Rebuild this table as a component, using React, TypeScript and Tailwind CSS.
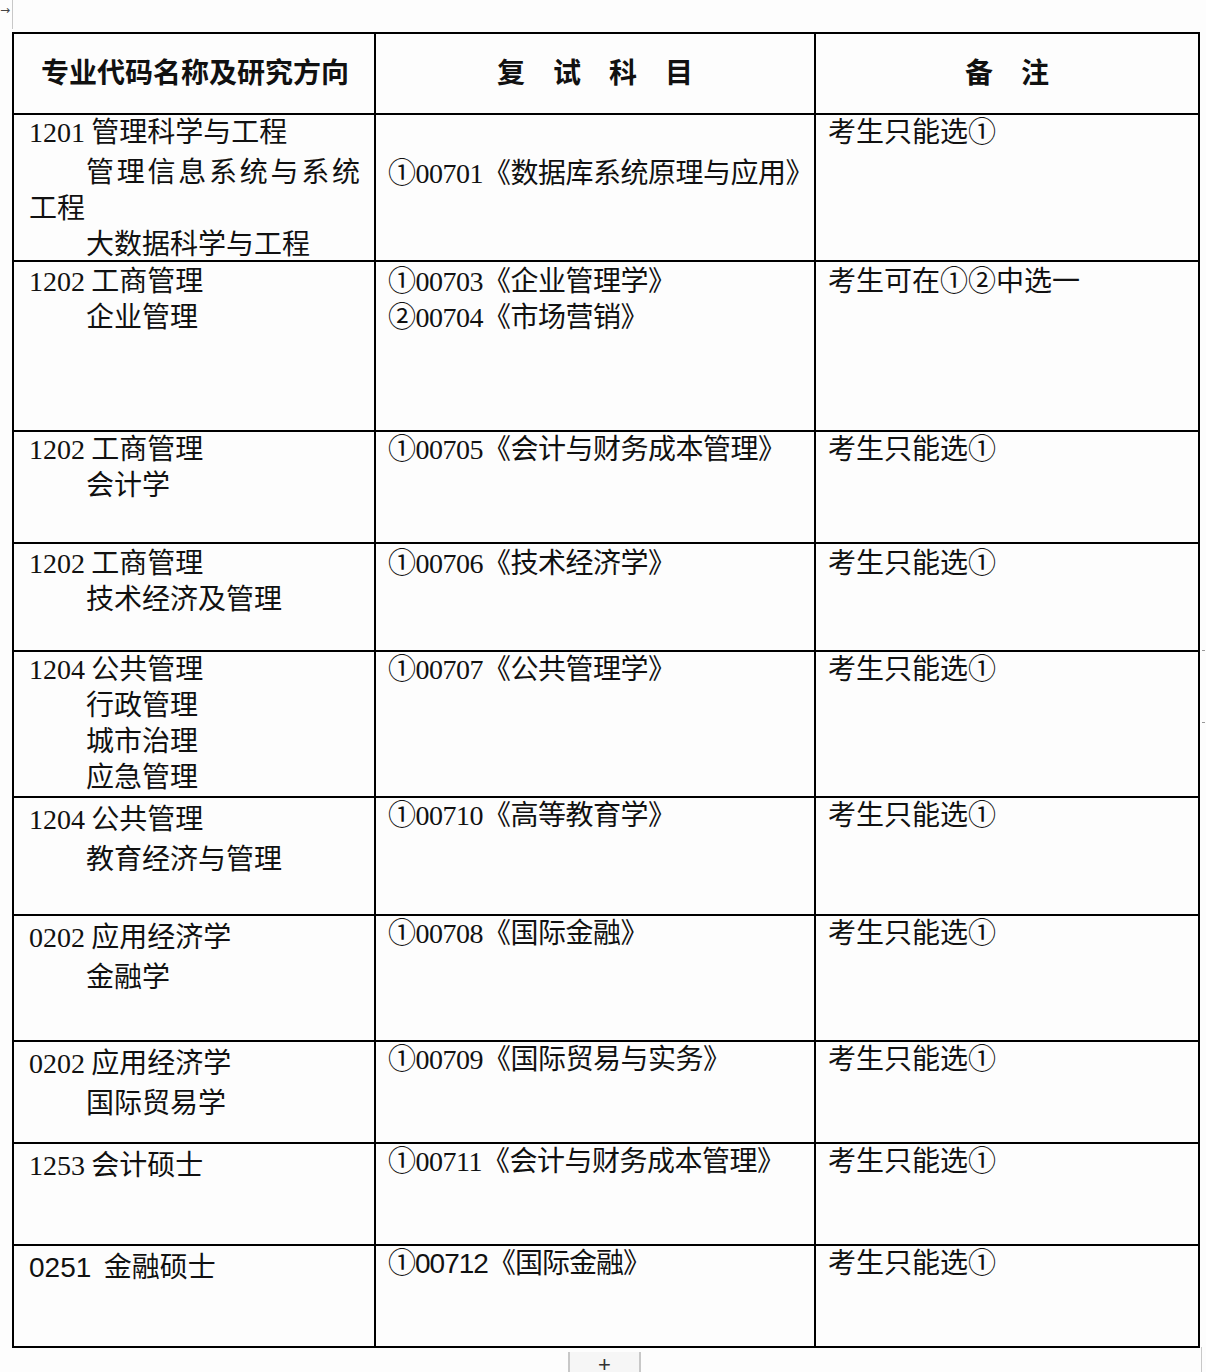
import React from "react";

const CJK = '"Noto Sans CJK SC", sans-serif';
const SERIF_F = '"Liberation Serif", serif';
const SANS_F = '"Liberation Sans", sans-serif';

function mix(text: string, digitFont: string = SERIF_F) {
  const parts = text.split(/(\d+)/);
  return parts.map((p, i) =>
    /^\d+$/.test(p) ? (
      <span key={i} className="leading-[0px]" style={{ fontFamily: digitFont }}>
        {p}
      </span>
    ) : (
      <React.Fragment key={i}>{p}</React.Fragment>
    )
  );
}

type Row = {
  h: string;
  c1: React.ReactNode;
  c2: React.ReactNode;
  c3: React.ReactNode;
};

const remark = "考生只能选①";

function Ind({ children, cls = "" }: { children: React.ReactNode; cls?: string }) {
  return <div className={"pl-[57px] " + cls}>{children}</div>;
}

const rows: Row[] = [
  {
    h: "h-[147px]",
    c1: (
      <div className="leading-[36px] -mt-[3px]">
        <div className="whitespace-nowrap">{mix("1201 管理科学与工程")}</div>
        <p className="mt-[4px] indent-[57px] text-justify whitespace-normal break-all">管理信息系统与系统工程</p>
        <Ind cls="whitespace-nowrap">大数据科学与工程</Ind>
      </div>
    ),
    c2: <div className="pt-[38px] leading-[36px]">{mix("①00701《数据库系统原理与应用》")}</div>,
    c3: <div className="leading-[36px] -mt-[3px]">{remark}</div>,
  },
  {
    h: "h-[170px]",
    c1: (
      <div className="leading-[36px] -mt-[1px] whitespace-nowrap">
        <div>{mix("1202 工商管理")}</div>
        <Ind>企业管理</Ind>
      </div>
    ),
    c2: (
      <div className="leading-[36px] -mt-[1px]">
        <div>{mix("①00703《企业管理学》")}</div>
        <div>{mix("②00704《市场营销》")}</div>
      </div>
    ),
    c3: <div className="leading-[36px] -mt-[1px]">考生可在①②中选一</div>,
  },
  {
    h: "h-[112px]",
    c1: (
      <div className="leading-[36px] -mt-[3px] whitespace-nowrap">
        <div>{mix("1202 工商管理")}</div>
        <Ind>会计学</Ind>
      </div>
    ),
    c2: <div className="leading-[36px] -mt-[3px]">{mix("①00705《会计与财务成本管理》")}</div>,
    c3: <div className="leading-[36px] -mt-[3px]">{remark}</div>,
  },
  {
    h: "h-[108px]",
    c1: (
      <div className="leading-[36px] -mt-[1px] whitespace-nowrap">
        <div>{mix("1202 工商管理")}</div>
        <Ind>技术经济及管理</Ind>
      </div>
    ),
    c2: <div className="leading-[36px] -mt-[1px]">{mix("①00706《技术经济学》")}</div>,
    c3: <div className="leading-[36px] -mt-[1px]">{remark}</div>,
  },
  {
    h: "h-[146px]",
    c1: (
      <div className="leading-[36px] -mt-[3px] whitespace-nowrap">
        <div>{mix("1204 公共管理")}</div>
        <Ind>行政管理</Ind>
        <Ind>城市治理</Ind>
        <Ind>应急管理</Ind>
      </div>
    ),
    c2: <div className="leading-[36px] -mt-[3px]">{mix("①00707《公共管理学》")}</div>,
    c3: <div className="leading-[36px] -mt-[3px]">{remark}</div>,
  },
  {
    h: "h-[118px]",
    c1: (
      <div className="leading-[40px] -mt-[1px] whitespace-nowrap">
        <div>{mix("1204 公共管理")}</div>
        <Ind>教育经济与管理</Ind>
      </div>
    ),
    c2: <div className="leading-[32px] -mt-[1px]">{mix("①00710《高等教育学》")}</div>,
    c3: <div className="leading-[32px] -mt-[1px]">{remark}</div>,
  },
  {
    h: "h-[126px]",
    c1: (
      <div className="leading-[40px] -mt-[1px] whitespace-nowrap">
        <div>{mix("0202 应用经济学")}</div>
        <Ind>金融学</Ind>
      </div>
    ),
    c2: <div className="leading-[32px] -mt-[1px]">{mix("①00708《国际金融》")}</div>,
    c3: <div className="leading-[32px] -mt-[1px]">{remark}</div>,
  },
  {
    h: "h-[102px]",
    c1: (
      <div className="leading-[40px] -mt-[1px] whitespace-nowrap">
        <div>{mix("0202 应用经济学")}</div>
        <Ind>国际贸易学</Ind>
      </div>
    ),
    c2: <div className="leading-[32px] -mt-[1px]">{mix("①00709《国际贸易与实务》")}</div>,
    c3: <div className="leading-[32px] -mt-[1px]">{remark}</div>,
  },
  {
    h: "h-[102px]",
    c1: (
      <div className="leading-[40px] -mt-[1px] whitespace-nowrap">
        <div>{mix("1253 会计硕士")}</div>
      </div>
    ),
    c2: <div className="leading-[32px] -mt-[1px]">{mix("①00711《会计与财务成本管理》")}</div>,
    c3: <div className="leading-[32px] -mt-[1px]">{remark}</div>,
  },
  {
    h: "h-[100px]",
    c1: (
      <div className="leading-[40px] -mt-[1px] whitespace-pre">
        <div>{mix("0251  金融硕士", SANS_F)}</div>
      </div>
    ),
    c2: (
      <div className="leading-[32px] -mt-[1px] tracking-[-1px]">{mix("①00712《国际金融》", SANS_F)}</div>
    ),
    c3: <div className="leading-[32px] -mt-[1px]">{remark}</div>,
  },
];

export default function App() {
  return (
    <div
      className="relative w-[1206px] min-h-[1372px] bg-[#fdfdfd] text-[#111] overflow-hidden"
      style={{ fontFamily: CJK }}
    >
      {/* top-left move handle */}
      <div className="h-[32px] flex">
        <div
          className="w-[13px] h-[29px] border-r border-[#c8c8c8] text-[12px] leading-[20px] text-[#444] overflow-hidden"
          style={{ fontFamily: '"DejaVu Sans", sans-serif' }}
        >
          →
        </div>
      </div>

      <div className="ml-[12px] w-[1188px] border-2 border-black text-[28px]">
        {/* header */}
        <div className="flex h-[81px] border-b-2 border-black font-bold">
          <div className="w-[362px] border-r-2 border-black flex items-center justify-center pl-[2px] pb-[5px]">
            专业代码名称及研究方向
          </div>
          <div className="w-[440px] border-r-2 border-black flex items-center justify-center pb-[5px]">
            复　试　科　目
          </div>
          <div className="flex-1 flex items-center justify-center pb-[5px]">备　注</div>
        </div>

        {rows.map((r, i) => (
          <div
            key={i}
            className={"flex " + r.h + (i < rows.length - 1 ? " border-b-2 border-black" : "")}
          >
            <div className="w-[362px] border-r-2 border-black pl-[15px] pr-[14px]">{r.c1}</div>
            <div className="w-[440px] border-r-2 border-black pl-[12px] whitespace-nowrap tracking-[-0.5px]">
              {r.c2}
            </div>
            <div className="flex-1 pl-[12px] whitespace-nowrap">{r.c3}</div>
          </div>
        ))}
      </div>

      {/* bottom add-row handle */}
      <div className="ml-[568px] mt-[4px] w-[73px] h-[24px] border-l-2 border-r-2 border-[#c8c8c8] bg-[#f6f6f6] flex items-end justify-center">
        <span className="text-[22px] leading-[22px] text-[#333]" style={{ fontFamily: SANS_F }}>
          +
        </span>
      </div>

      {/* right side marks */}
      <div className="absolute left-[1201px] top-[1347px] w-px h-[30px] bg-[#c8c8c8]" />
      <div className="absolute left-[1202px] top-[650px] w-[3px] h-px bg-[#999]" />
      <div className="absolute left-[1202px] top-[722px] w-[3px] h-px bg-[#999]" />
    </div>
  );
}
